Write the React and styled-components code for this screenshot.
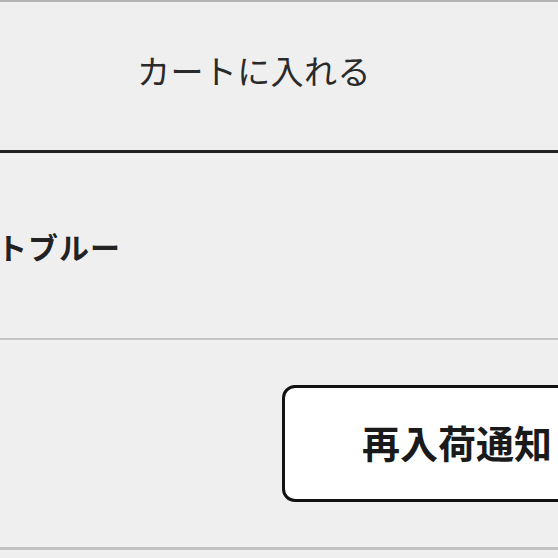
import React from "react";
import styled, { createGlobalStyle } from "styled-components";

const Global = createGlobalStyle`
  html, body { margin: 0; padding: 0; }
  body {
    background: #efefef;
    font-family: "Noto Sans CJK JP", "Noto Sans", sans-serif;
    overflow: hidden;
    width: 558px;
    height: 558px;
  }
`;

const Page = styled.div`
  display: flex;
  flex-direction: column;
  width: 558px;
  height: 558px;
  overflow: hidden;
  border-top: 2px solid #b4b4b4;
  box-sizing: border-box;
`;

const Section = styled.section`
  display: flex;
  align-items: center;
  box-sizing: content-box;
  height: ${(p) => p.$h}px;
  border-bottom: ${(p) => p.$border};
  flex-shrink: 0;
`;

const CartLabel = styled.span`
  padding-left: 137px;
  padding-bottom: 12px;
  font-size: 33px;
  line-height: 1;
  color: #2a2a2a;
  letter-spacing: 0.4px;
`;

const ColorName = styled.span`
  margin-left: -65px;
  font-size: 30px;
  font-weight: 700;
  line-height: 1;
  color: #222;
  letter-spacing: 1px;
  white-space: nowrap;
`;

const NotifyButton = styled.button`
  margin-left: 282px;
  flex-shrink: 0;
  width: 350px;
  height: 117px;
  box-sizing: border-box;
  display: flex;
  align-items: center;
  padding: 0 0 4px 77px;
  background: #fff;
  border: 3px solid #111;
  border-radius: 13px;
  font-family: inherit;
  font-size: 38px;
  font-weight: 700;
  line-height: 1;
  color: #1a1a1a;
  white-space: nowrap;
`;

export default function App() {
  return (
    <>
      <Global />
      <Page>
        <Section $h={148} $border="3px solid #222">
          <CartLabel>カートに入れる</CartLabel>
        </Section>
        <Section $h={185} $border="2px solid #c4c4c4">
          <ColorName>ライトブルー</ColorName>
        </Section>
        <Section $h={207} $border="3px solid #c2c2c2">
          <NotifyButton>再入荷通知</NotifyButton>
        </Section>
      </Page>
    </>
  );
}
